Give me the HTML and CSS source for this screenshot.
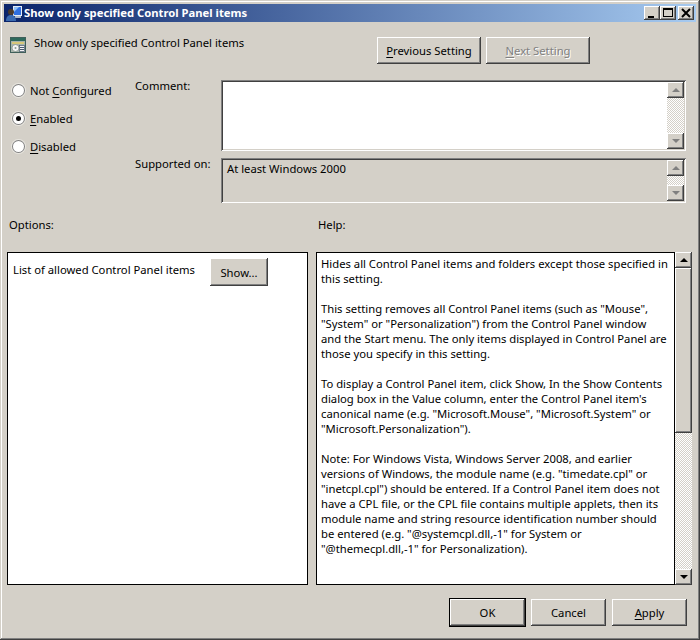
FILE: index.html
```html
<!DOCTYPE html>
<html lang="en">
<head>
<meta charset="utf-8">
<title>Show only specified Control Panel items</title>
<link rel="stylesheet" href="styles.css">
</head>
<body>
<div class="window">
  <div class="titlebar">
    <svg class="title-icon" width="16" height="16" viewBox="0 0 16 16"><rect x="7" y="1" width="9" height="10" fill="#e4ecf6"/><rect x="8" y="2" width="7" height="8" fill="#2f6fe0"/><path d="M8 2h5L8 7z" fill="#8fc0f8"/><rect x="9" y="11" width="6" height="2" fill="#aeb8c8"/><circle cx="5" cy="7" r="3" fill="#4a3a2c"/><path d="M0 16c0-4 2-6 5-6s5 2 5 6z" fill="#3a6ab0"/></svg>
    <span class="title-text">Show only specified Control Panel items</span>
    <div class="caption-buttons">
      <span class="caption-btn"><svg width="14" height="12" viewBox="0 0 14 12"><rect x="3" y="9" width="6" height="2" fill="#000"/></svg></span>
      <span class="caption-btn"><svg width="14" height="12" viewBox="0 0 14 12"><path d="M2 1h10v9H2zM3 3v6h8V3z" fill="#000" fill-rule="evenodd"/></svg></span>
      <span class="caption-btn close"><svg width="14" height="12" viewBox="0 0 14 12"><path d="M3 2l8 8M11 2l-8 8" stroke="#000" stroke-width="2" fill="none"/></svg></span>
    </div>
  </div>

  <div class="header">
    <svg class="policy-icon" width="16" height="16" viewBox="0 0 16 16"><rect x="0.500" y="0.500" width="15" height="15" fill="#a8b4ac" stroke="#3f5f5a"/><rect x="1" y="1" width="14" height="3" fill="#2e6a5c"/><rect x="2" y="5" width="12" height="2" fill="#d8c878"/><circle cx="5.500" cy="11" r="3.500" fill="#f6f6f6" stroke="#7a8a80" stroke-width="0.700"/><circle cx="5.500" cy="11" r="1" fill="#8a9a90"/><rect x="9.500" y="8.500" width="5" height="6" fill="#f4f4f4" stroke="#4a5a70" stroke-width="0.700"/><path d="M10 10.500h4M10 12.500h4" stroke="#4a5a70"/></svg>
    <span class="policy-name">Show only specified Control Panel items</span>
    <div class="nav-buttons">
      <button class="btn nav"><u>P</u>revious Setting</button>
      <button class="btn nav disabled"><u>N</u>ext Setting</button>
    </div>
  </div>

  <div class="settings">
    <div class="radios">
      <div class="radio-row"><span class="radio"></span><span>Not <u>C</u>onfigured</span></div>
      <div class="radio-row"><span class="radio on"></span><span><u>E</u>nabled</span></div>
      <div class="radio-row"><span class="radio"></span><span><u>D</u>isabled</span></div>
    </div>
    <div class="fields">
      <div class="field-row comment-row">
        <label class="field-label">Comment:</label>
        <div class="field-box comment-box">
          <div class="field-content"></div>
          <div class="scrollbar inactive">
            <span class="arrow"><i class="tri up"></i></span><span class="track"></span><span class="arrow"><i class="tri down"></i></span>
          </div>
        </div>
      </div>
      <div class="field-row supported-row">
        <label class="field-label">Supported on:</label>
        <div class="field-box supported-box">
          <div class="field-content">At least Windows 2000</div>
          <div class="scrollbar inactive">
            <span class="arrow"><i class="tri up"></i></span><span class="track"></span><span class="arrow"><i class="tri down"></i></span>
          </div>
        </div>
      </div>
    </div>
  </div>

  <div class="pane-labels">
    <span class="options-label">Options:</span>
    <span>Help:</span>
  </div>

  <div class="panes">
    <div class="options-pane">
      <span class="options-item">List of allowed Control Panel items</span>
      <button class="btn show">Show...</button>
    </div>
    <div class="help-pane">
      <div class="help-text">
        <p>Hides all Control Panel items and folders except those specified in<br>this setting.</p>
        <p>This setting removes all Control Panel items (such as "Mouse",<br>"System" or "Personalization") from the Control Panel window<br>and the Start menu. The only items displayed in Control Panel are<br>those you specify in this setting.</p>
        <p>To display a Control Panel item, click Show, In the Show Contents<br>dialog box in the Value column, enter the Control Panel item's<br>canonical name (e.g. "Microsoft.Mouse", "Microsoft.System" or<br>"Microsoft.Personalization").</p>
        <p>Note: For Windows Vista, Windows Server 2008, and earlier<br>versions of Windows, the module name (e.g. "timedate.cpl" or<br>"inetcpl.cpl") should be entered. If a Control Panel item does not<br>have a CPL file, or the CPL file contains multiple applets, then its<br>module name and string resource identification number should<br>be entered (e.g. "@systemcpl.dll,-1" for System or<br>"@themecpl.dll,-1" for Personalization).</p>
      </div>
      <div class="scrollbar help-scroll">
        <span class="arrow"><i class="tri up"></i></span>
        <span class="thumb"></span>
        <span class="track"></span>
        <span class="arrow"><i class="tri down"></i></span>
      </div>
    </div>
  </div>

  <div class="footer">
    <button class="btn action default">OK</button>
    <button class="btn action">Cancel</button>
    <button class="btn action"><u>A</u>pply</button>
  </div>
</div>
</body>
</html>
```
FILE: styles.css
```css
* { box-sizing: border-box; }
html, body { margin: 0; padding: 0; }
body {
  width: 700px;
  height: 640px;
  overflow: hidden;
  font-family: "Noto Sans", "Open Sans", sans-serif;
  font-size: 11.25px;
  line-height: 15px;
  color: #000;
  background: #d4d0c8;
}
u { text-underline-offset: 2px; }
.window {
  width: 700px;
  height: 640px;
  padding: 4px 4px 0;
  display: flex;
  flex-direction: column;
  background: #d4d0c8;
  box-shadow: inset -1px -1px 0 #404040, inset 1px 1px 0 #d4d0c8, inset -2px -2px 0 #808080, inset 2px 2px 0 #fff;
}
.titlebar {
  height: 18px;
  display: flex;
  align-items: center;
  padding: 0 2px;
  background: linear-gradient(to right, #0a246a, #a6caf0);
  flex: none;
}
.title-icon { flex: none; }
.title-text {
  margin-left: 2px;
  margin-top: -2px;
  color: #fff;
  font-weight: 700;
  white-space: nowrap;
}
.caption-buttons { margin-left: auto; display: flex; }
.caption-btn {
  width: 16px;
  height: 14px;
  background: #d4d0c8;
  box-shadow: inset -1px -1px 0 #404040, inset 1px 1px 0 #fff, inset -2px -2px 0 #808080;
  display: flex;
  align-items: center;
  justify-content: center;
}
.caption-btn.close { margin-left: 2px; }
.header {
  display: flex;
  align-items: flex-start;
  height: 57px;
  padding-left: 6px;
  padding-right: 106px;
  flex: none;
}
.policy-icon { margin-top: 15px; flex: none; }
.policy-name { margin-left: 8px; margin-top: 13px; white-space: nowrap; }
.nav-buttons { margin-left: auto; margin-top: 15px; display: flex; gap: 5px; }
.btn {
  font: inherit;
  color: #000;
  background: #d4d0c8;
  border: 0;
  padding: 0;
  box-shadow: inset -1px -1px 0 #404040, inset 1px 1px 0 #fff, inset -2px -2px 0 #808080;
}
.nav { width: 104px; height: 27px; }
.nav.disabled { color: #808080; text-shadow: 1px 1px 0 #fff; }
.settings { display: flex; height: 138px; flex: none; }
.radios { width: 131px; padding-left: 9px; margin-top: -3px; display: flex; flex-direction: column; }
.radio-row { height: 28px; display: flex; align-items: center; gap: 6px; }
.radio {
  width: 11px;
  height: 11px;
  border-radius: 50%;
  background: #fff;
  box-shadow: 0 0 0 1px #808080, 0 0 0 2px #e8e6e0;
  display: flex;
  align-items: center;
  justify-content: center;
}
.radio.on::after { content: ""; width: 5px; height: 5px; border-radius: 50%; background: #000; }
.fields { display: flex; flex-direction: column; gap: 7px; margin-top: 1px; }
.field-row { display: flex; }
.field-label { width: 86px; white-space: nowrap; margin-top: -2px; }
.field-box {
  width: 465px;
  display: flex;
  padding: 2px;
  box-shadow: inset 1px 1px 0 #808080, inset -1px -1px 0 #fff, inset 2px 2px 0 #404040, inset -2px -2px 0 #d4d0c8;
}
.comment-box { height: 71px; background: #fff; }
.supported-box { height: 45px; background: #d4d0c8; }
.field-content { flex: 1; padding: 1px 4px; }
.scrollbar { width: 17px; display: flex; flex-direction: column; flex: none; }
.arrow {
  height: 16px;
  flex: none;
  background: #d4d0c8;
  box-shadow: inset -1px -1px 0 #404040, inset 1px 1px 0 #fff, inset -2px -2px 0 #808080;
  display: flex;
  align-items: center;
  justify-content: center;
}
.tri { display: block; width: 0; height: 0; border-left: 4px solid transparent; border-right: 4px solid transparent; }
.tri.up { border-bottom: 4px solid #000; }
.tri.down { border-top: 4px solid #000; }
.inactive .tri.up { border-bottom-color: #808080; }
.inactive .tri.down { border-top-color: #808080; }
.track {
  flex: 1;
  background-color: #fff;
  background-image: conic-gradient(#d4d0c8 25%, #fff 0 50%, #d4d0c8 0 75%, #fff 0);
  background-size: 2px 2px;
}
.pane-labels { display: flex; height: 35px; padding-left: 5px; flex: none; }
.options-label { width: 309px; }
.panes { display: flex; height: 333px; padding-left: 3px; flex: none; }
.options-pane {
  width: 301px;
  background: #fff;
  border: 1px solid #000;
  display: flex;
  align-items: flex-start;
  padding: 9px 0 0 5px;
}
.options-item { width: 182px; flex: none; white-space: nowrap; }
.show { width: 58px; height: 28px; margin: -4px 0 0 15px; }
.help-pane { margin-left: 8px; display: flex; }
.help-text {
  width: 359px;
  background: #fff;
  border: 1px solid #000;
  padding: 3px 0 0 4px;
  white-space: nowrap;
  overflow: hidden;
}
.help-text p { margin: 0 0 15px; }
.thumb {
  height: 165px;
  flex: none;
  background: #d4d0c8;
  box-shadow: inset -1px -1px 0 #404040, inset 1px 1px 0 #fff, inset -2px -2px 0 #808080;
}
.footer { display: flex; justify-content: flex-end; gap: 6px; padding: 14px 9px 0 0; flex: none; }
.action { width: 75px; height: 27px; }
.default { box-shadow: 0 0 0 1px #000, inset -1px -1px 0 #404040, inset 1px 1px 0 #fff, inset -2px -2px 0 #808080; }
```
